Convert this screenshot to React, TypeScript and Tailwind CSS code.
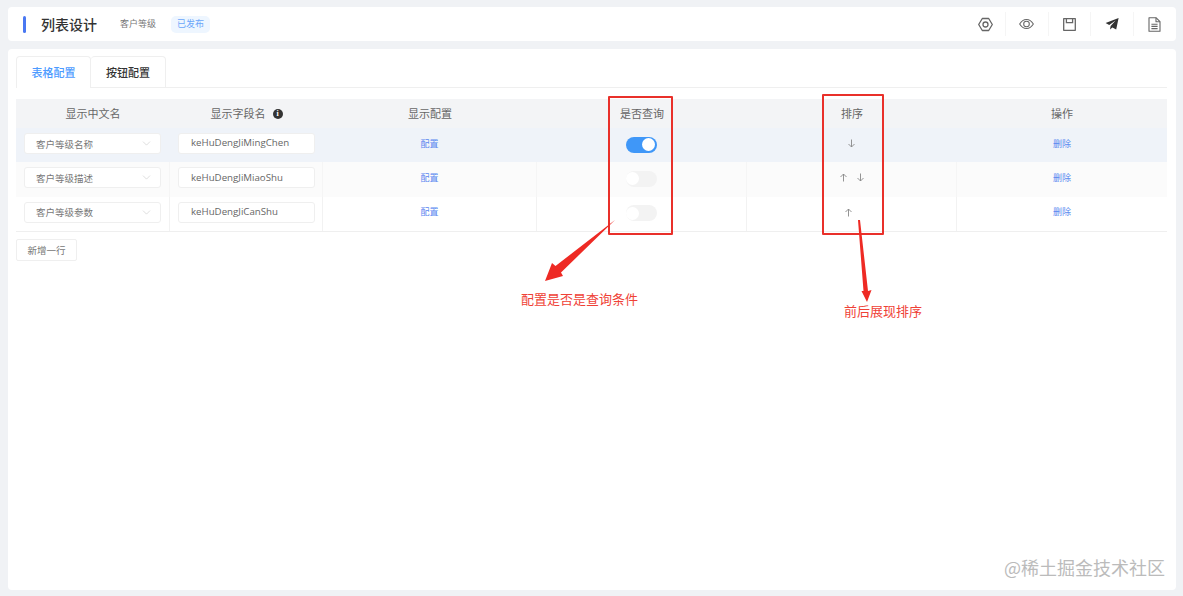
import React from "react";
import { ChevronDown } from "lucide-react";

const rows = [
  { name: "客户等级名称", field: "keHuDengJiMingChen", on: true, up: false, down: true, rowClass: "bg-[#eff3f9]", line: "border-transparent", sortClass: "" },
  { name: "客户等级描述", field: "keHuDengJiMiaoShu", on: false, up: true, down: true, rowClass: "bg-[#fbfbfb]", line: "border-[#f5f5f5]", sortClass: "" },
  { name: "客户等级参数", field: "keHuDengJiCanShu", on: false, up: true, down: false, rowClass: "bg-white", line: "border-[#f2f2f2]", sortClass: "pr-[7px]" },
];

const UpArrow = () => (
  <svg width="9" height="9" viewBox="0 0 9 9" fill="none" stroke="#888" strokeWidth="0.9">
    <path d="M4.5 8.5V1M1.5 4l3-3 3 3" />
  </svg>
);

const DownArrow = () => (
  <svg width="9" height="9" viewBox="0 0 9 9" fill="none" stroke="#888" strokeWidth="0.9">
    <path d="M4.5 0.5V8M1.5 5l3 3 3-3" />
  </svg>
);

const Divider = ({ className = "" }: { className?: string }) => (
  <span className={`h-[24px] w-px bg-[#f5f5f5] ${className}`} />
);

const GearIcon = () => (
  <svg width="15" height="15" viewBox="0 0 15 15" fill="none" stroke="#666" strokeWidth="1.3" strokeLinejoin="round" className="translate-x-px">
    <path d="M4.3 1.5h6.4l3.6 6-3.6 6H4.3L.7 7.5z" />
    <circle cx="7.5" cy="7.5" r="2.5" />
  </svg>
);

const EyeIcon = () => (
  <svg width="15" height="12" viewBox="0 0 16 12" fill="none" stroke="#666" strokeWidth="1.1">
    <path d="M0.7 6C2.6 2.8 5 1.2 8 1.2S13.4 2.8 15.3 6C13.4 9.2 11 10.8 8 10.8S2.6 9.2.7 6z" />
    <circle cx="8" cy="6" r="3" />
  </svg>
);

const SaveIcon = () => (
  <svg width="13" height="13" viewBox="0 0 13 13" fill="none" stroke="#666" strokeWidth="1.3">
    <path d="M.7.7h11.6v11.6H.7z" strokeLinejoin="round" />
    <path d="M3.4.7v4h6.2v-4" />
  </svg>
);

const SendIcon = () => (
  <svg width="14" height="12" viewBox="0 0 14 12" fill="#333">
    <path d="M13.6 0L0.6 5l3.6 1.9L10.6 2.6 5.6 8.1 5 11.6l2.4-2.2 3.8 2.1z" />
  </svg>
);

const DocIcon = () => (
  <svg width="13" height="15" viewBox="0 0 13 15" fill="none" stroke="#666" strokeWidth="1.1" strokeLinejoin="round">
    <path d="M1 .8h7.2L12 4.6v9.6H1z" />
    <path d="M8 .8v4h4M3.4 7.2h6.2M3.4 9.4h6.2M3.4 11.6h6.2" />
  </svg>
);

const Header = () => (
  <div className="flex h-[34px] items-center rounded-sm bg-white pl-[15px] pr-[15px]">
    <span className="h-[17px] w-[3px] rounded-sm bg-[#4a78f2]" />
    <span className="ml-[15px] text-[14px] font-medium text-[#333]">列表设计</span>
    <span className="ml-[23px] text-[9px] text-[#777]">客户等级</span>
    <span className="ml-[15px] flex h-[17px] w-[39px] items-center justify-center rounded-[5px] bg-[#eef6ff] text-[9px] text-[#6ba6fa]">
      已发布
    </span>
    <div className="ml-auto flex items-center gap-[14px]">
      <GearIcon />
      <Divider className="-mx-px" />
      <EyeIcon />
      <Divider />
      <SaveIcon />
      <Divider />
      <SendIcon />
      <Divider />
      <DocIcon />
    </div>
  </div>
);

const Tabs = () => (
  <div className="flex h-[32px] border-b border-[#efefef]">
    <div className="flex h-[32px] w-[75px] items-center justify-center rounded-t-sm border border-b-0 border-[#efefef] bg-white text-[11px] font-medium text-[#4d9bff]">
      表格配置
    </div>
    <div className="flex h-[32px] w-[75px] items-center justify-center rounded-t-sm border border-l-0 border-[#efefef] text-[11px] font-medium text-[#333]">
      按钮配置
    </div>
  </div>
);

const Toggle = ({ on }: { on: boolean }) =>
  on ? (
    <span className="flex h-4 w-[31px] items-center justify-end rounded-full bg-[#3f97f8] pr-[2px]">
      <span className="h-[13px] w-[13px] rounded-full bg-white" />
    </span>
  ) : (
    <span className="flex h-4 w-[31px] items-center rounded-full bg-[#f3f3f3]">
      <span className="h-[13px] w-[13px] rounded-full bg-white" />
    </span>
  );

const Table = () => (
  <div className="mt-[11px] border-b border-[#efefef] text-[#666]">
    <div className="grid h-[29px] grid-cols-[154px_153px_214px_210px_210px_210px] items-center bg-[#f3f4f6] text-center text-[11px]">
      <div>显示中文名</div>
      <div className="flex items-center justify-center gap-[7px]">
        显示字段名
        <span className="flex h-[10px] w-[10px] items-center justify-center rounded-full bg-[#333] font-['Liberation_Serif',serif] text-[8px] font-bold text-white">
          i
        </span>
      </div>
      <div>显示配置</div>
      <div>是否查询</div>
      <div>排序</div>
      <div>操作</div>
    </div>
    {rows.map((row) => (
      <div
        key={row.field}
        className={`grid h-[34.25px] grid-cols-[154px_153px_214px_210px_210px_210px] items-center text-center ${row.rowClass}`}
      >
        <div className={`flex h-full items-center border-r pb-[3px] pl-2 ${row.line}`}>
          <div className="flex h-[21px] w-[137px] items-center justify-between rounded-[3px] border border-[#efefef] bg-white pl-[11px] pr-[7px] text-[9.5px] text-[#777]">
            {row.name}
            <ChevronDown size={13} strokeWidth={1} className="text-[#c4c4c4]" />
          </div>
        </div>
        <div className={`flex h-full items-center border-r pb-[3px] pl-2 ${row.line}`}>
          <div className="flex h-[21px] w-[137px] items-center rounded-[3px] border border-[#efefef] bg-white pl-3 font-['Open_Sans',sans-serif] text-[9.7px] text-[#666]">
            {row.field}
          </div>
        </div>
        <div className={`flex h-full items-center justify-center border-r pb-[3px] text-[9px] text-[#5a88f0] ${row.line}`}>配置</div>
        <div className={`flex h-full items-center justify-center border-r pb-px ${row.line}`}>
          <Toggle on={row.on} />
        </div>
        <div className={`flex h-full items-center justify-center gap-2 border-r pb-[3px] ${row.line} ${row.sortClass}`}>
          {row.up && <UpArrow />}
          {row.down && <DownArrow />}
        </div>
        <div className="pb-[3px] text-[9px] text-[#5a88f0]">删除</div>
      </div>
    ))}
  </div>
);

// 图上的红色标注
const Annotations = () => (
  <>
    <div className="absolute left-[608px] top-[96px] h-[139px] w-[65px] rounded-[1px] border-2 border-[#e9302a]" />
    <div className="absolute left-[822px] top-[94px] h-[141px] w-[62px] rounded-[1px] border-2 border-[#e9302a]" />
    <svg className="absolute left-0 top-0" width="1183" height="596">
      <polygon points="615,220 561,272.5 563,276 545,281 552,263 555.5,266" fill="#ee2a24" />
      <polygon points="858,220 860,220 868,291 871.5,290 867,302 861.5,291 863.5,291" fill="#ee2a24" />
    </svg>
    <span className="absolute left-[521px] top-[290px] text-[13px] leading-[18px] text-[#ef4136]">配置是否是查询条件</span>
    <span className="absolute left-[844px] top-[302px] text-[13px] leading-[18px] text-[#ef4136]">前后展现排序</span>
    <span className="absolute left-[1004px] top-[555px] text-[18px] leading-[24px] text-[#bbbbbb]">@稀土掘金技术社区</span>
  </>
);

export default function App() {
  return (
    <div className="relative h-[596px] w-[1183px] overflow-hidden bg-[#f0f2f5] pb-[6px] pl-2 pr-[7px] pt-[7px] font-['Noto_Sans_CJK_SC','Noto_Sans',sans-serif]">
      <Header />
      <div className="mt-2 h-[541px] rounded-sm bg-white pl-2 pr-[9px] pt-[7px]">
        <Tabs />
        <Table />
        <button className="mt-[7px] flex h-[22px] w-[61px] items-center justify-center rounded-[2px] border border-[#efefef] bg-white text-[9.5px] text-[#777]">
          新增一行
        </button>
      </div>
      <Annotations />
    </div>
  );
}
